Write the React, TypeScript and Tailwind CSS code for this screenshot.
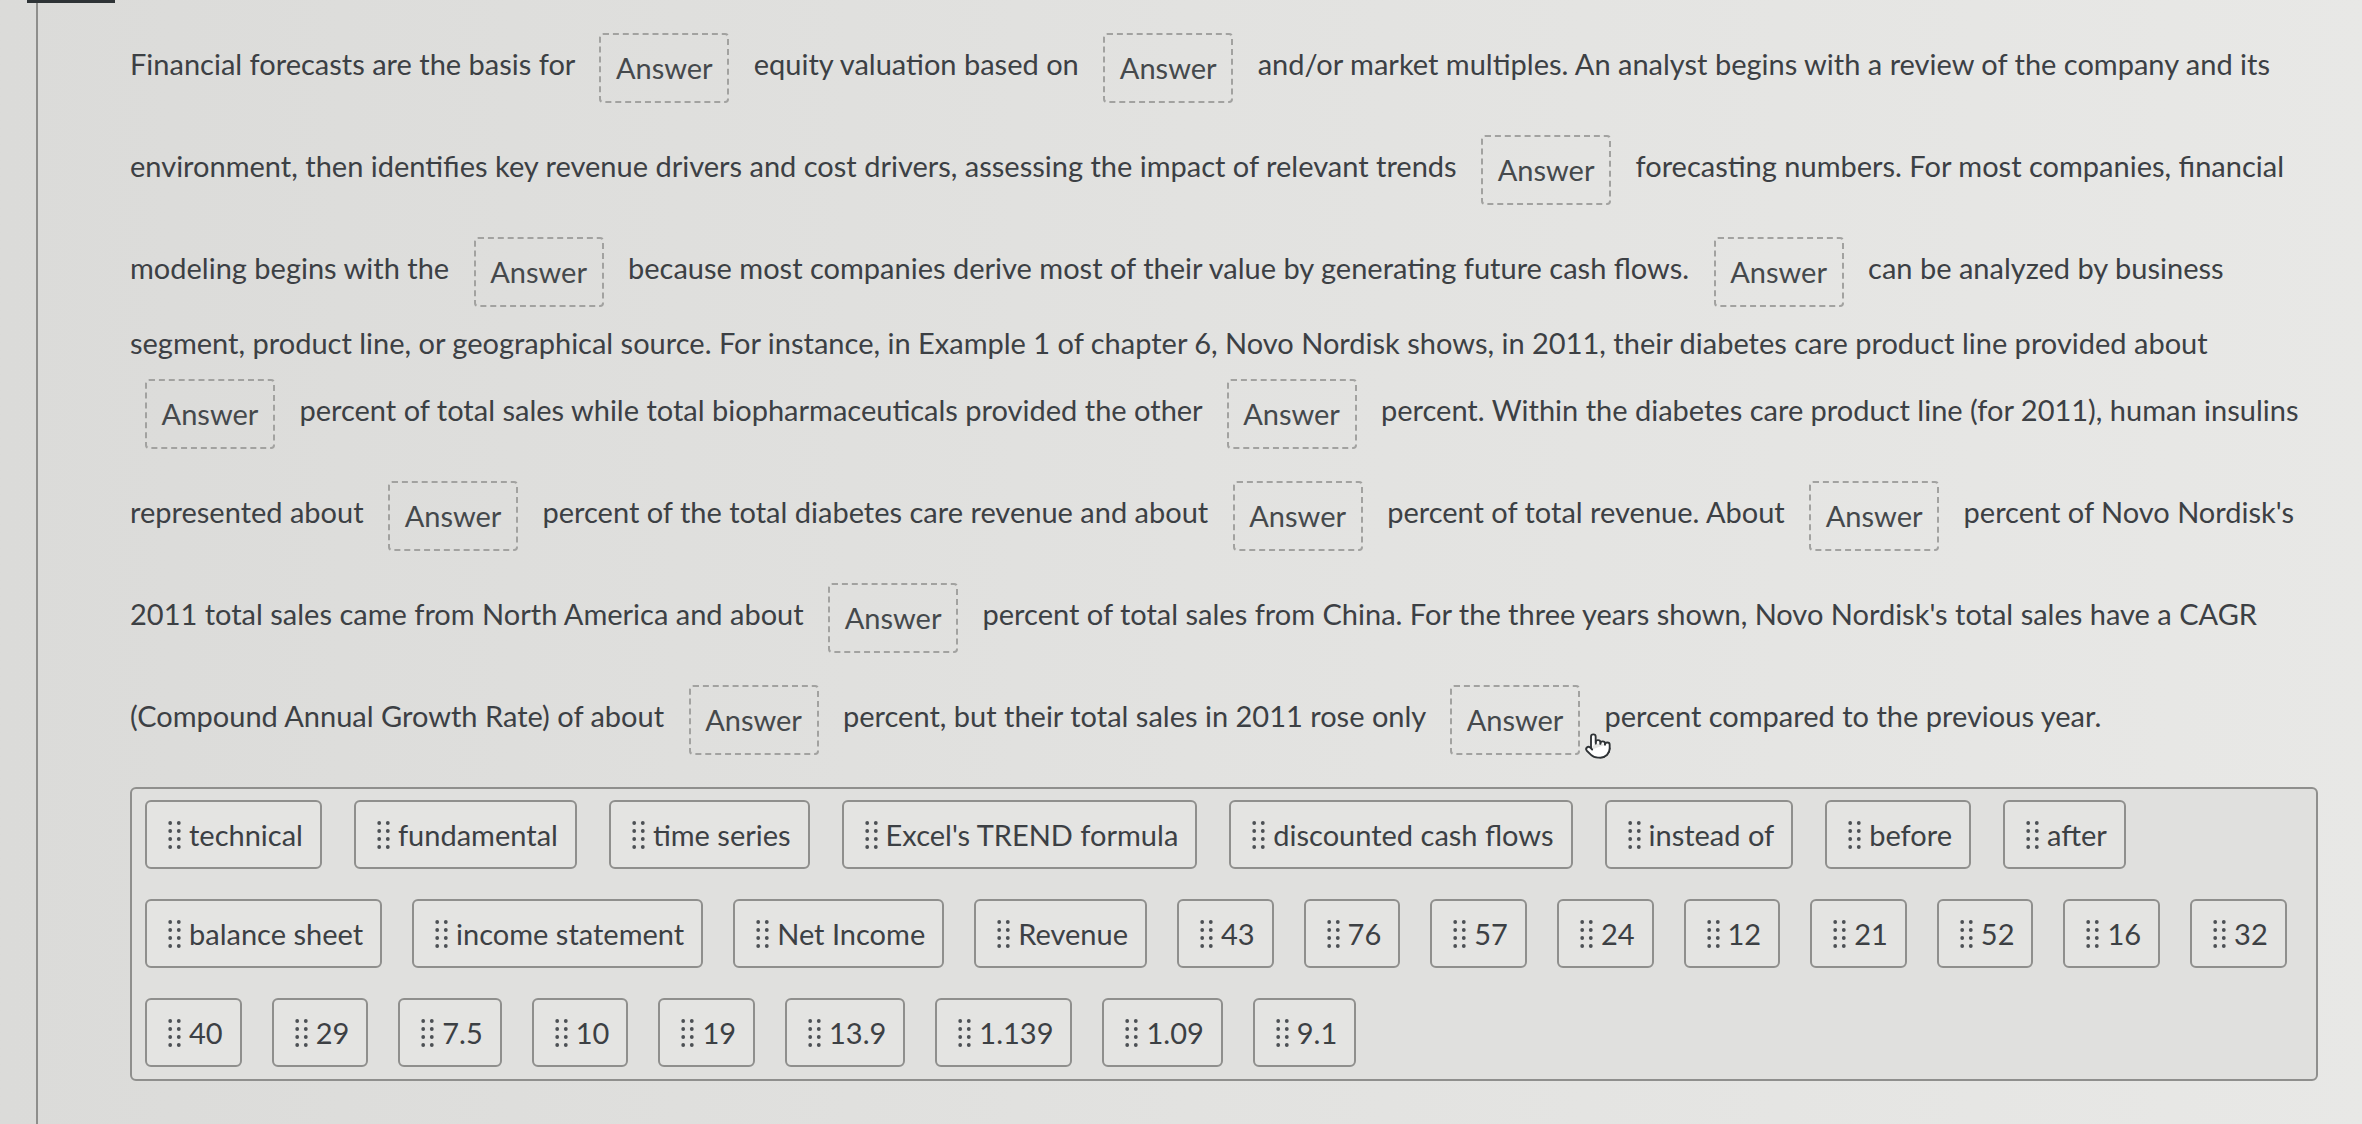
import React from "react";
import { Pointer } from "lucide-react";

const Grip = () => (
  <svg width="13" height="30" viewBox="0 0 13 30" className="shrink-0">
    {[3, 11, 19, 27].map((y) =>
      [2.2, 10.8].map((x) => <circle key={`${x}-${y}`} cx={x} cy={y} r="1.9" fill="#4c5054" />)
    )}
  </svg>
);

const boxCls =
  "inline-flex align-middle items-center justify-center my-4 w-[130px] h-[70px] border-2 border-dashed border-[#a2a2a0] rounded-[4px] text-[#45494c]";

const A = () => (
  <>
    {" "}
    <span className={`${boxCls} mx-[17px]`}>Answer</span>{" "}
  </>
);

const Item = ({ t }: { t: string }) => (
  <div className="flex items-center h-[69px] pl-[21px] pr-[17px] gap-[8px] border-2 border-[#8f8f8d] rounded-[6px] bg-[#e4e4e2] text-[#3c4044] whitespace-nowrap">
    <Grip />
    <span>{t}</span>
  </div>
);

const row1 = ["technical", "fundamental", "time series", "Excel's TREND formula", "discounted cash flows", "instead of", "before", "after"];
const row2 = ["balance sheet", "income statement", "Net Income", "Revenue", "43", "76", "57", "24", "12", "21", "52", "16", "32"];
const row3 = ["40", "29", "7.5", "10", "19", "13.9", "1.139", "1.09", "9.1"];

export default function App() {
  return (
    <div className="relative w-[2362px] h-[1124px] overflow-hidden bg-linear-to-r from-[#dbdbd9] via-[#e2e2e0] to-[#e8e8e6] font-['Lato',sans-serif] text-[29px] text-[#3c4044]">
      <div className="absolute left-[27px] top-0 w-[88px] h-[3px] bg-[#2e3336]" />
      <div className="flex h-full">
        <div className="w-[36px] shrink-0" />
        <div className="border-l-2 border-[#8e8e8c] flex-1 pl-[92px] pt-[17px]">
          <div className="leading-[40px] whitespace-nowrap">
            <div>
              Financial forecasts are the basis for<A />equity valuation based on<A />and/or market multiples. An analyst begins with a review of the company and its
            </div>
            <div>
              environment, then identifies key revenue drivers and cost drivers, assessing the impact of relevant trends<A />forecasting numbers. For most companies, financial
            </div>
            <div>
              modeling begins with the<A />because most companies derive most of their value by generating future cash flows.<A />can be analyzed by business
            </div>
            <div>
              segment, product line, or geographical source. For instance, in Example 1 of chapter 6, Novo Nordisk shows, in 2011, their diabetes care product line provided about
            </div>
            <div>
              <span className={`${boxCls} mr-[17px] ml-[15px]`}>Answer</span>{" "}
              percent of total sales while total biopharmaceuticals provided the other<A />percent. Within the diabetes care product line (for 2011), human insulins
            </div>
            <div>
              represented about<A />percent of the total diabetes care revenue and about<A />percent of total revenue. About<A />percent of Novo Nordisk's
            </div>
            <div>
              2011 total sales came from North America and about<A />percent of total sales from China. For the three years shown, Novo Nordisk's total sales have a CAGR
            </div>
            <div>
              (Compound Annual Growth Rate) of about<A />percent, but their total sales in 2011 rose only<A />percent compared to the previous year.
            </div>
          </div>

          <div className="mt-4 w-[2188px] border-2 border-[#8f8f8d] rounded-[6px] bg-[#e0e0de] pl-[13px] pt-[11px] pb-[12px] flex flex-col gap-[30px]">
            <div className="flex gap-[32px]">
              {row1.map((t) => (
                <Item key={t} t={t} />
              ))}
            </div>
            <div className="flex gap-[30px]">
              {row2.map((t) => (
                <Item key={t} t={t} />
              ))}
            </div>
            <div className="flex gap-[30px]">
              {row3.map((t) => (
                <Item key={t} t={t} />
              ))}
            </div>
          </div>
        </div>
      </div>
      <div className="absolute left-[1584px] top-[732px]">
        <Pointer size={28} strokeWidth={1.6} color="#2f3336" fill="#ffffff" />
      </div>
    </div>
  );
}
